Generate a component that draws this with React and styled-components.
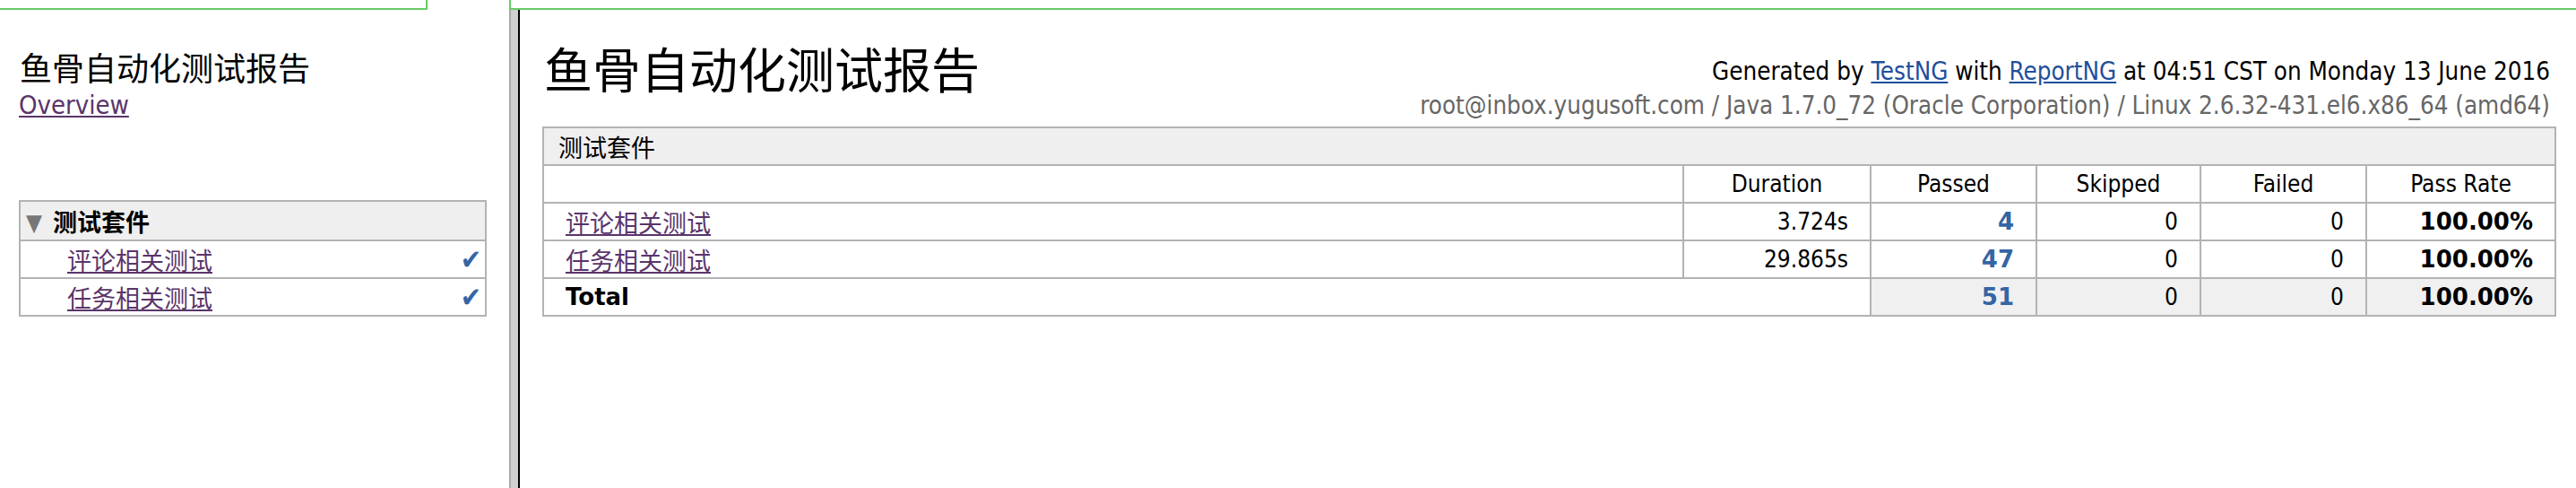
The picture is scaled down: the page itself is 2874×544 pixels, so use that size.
import React from 'react';
import styled, { createGlobalStyle } from 'styled-components';

const Global = createGlobalStyle`
  html, body { margin: 0; padding: 0; background: #fff; }
  body {
    font-family: "DejaVu Sans Condensed", "DejaVu Sans", "Noto Sans CJK SC", sans-serif;
    font-stretch: condensed;
    font-size: 26px;
    color: #000;
  }
`;

const Page = styled.div`
  width: 2874px;
  height: 544px;
  display: flex;
  flex-direction: column;
  overflow: hidden;
`;

const FocusStrip = styled.div`
  display: flex;
  height: 11px;
  flex: none;
`;

const LeftFocus = styled.div`
  width: 475px;
  height: 9px;
  border-right: 2px solid #66cc66;
  border-bottom: 2px solid #66cc66;
`;

const RightFocus = styled.div`
  flex: 1;
  margin-left: 91px;
  height: 9px;
  border-left: 2px solid #66cc66;
  border-bottom: 2px solid #66cc66;
`;

const Body = styled.div`
  flex: 1;
  display: flex;
  min-height: 0;
`;

const Sidebar = styled.div`
  width: 547px;
  padding-left: 21px;
  flex: none;
`;

const Divider = styled.div`
  width: 8px;
  flex: none;
  background: #d0d0d0;
  border-left: 2px solid #a9a9a9;
  border-right: 2px solid #000;
`;

const Main = styled.div`
  flex: 1;
  padding: 0 22px 0 25px;
  min-width: 0;
`;

const SideTitle = styled.h2`
  margin: 42px 0 0 1px;
  font-family: "Noto Sans CJK SC", sans-serif;
  font-weight: 400;
  font-size: 36px;
  line-height: 43px;
`;

const OverviewLink = styled.a`
  display: inline-block;
  margin-top: 5px;
  font-size: 29px;
  line-height: 33px;
  color: #5a356a;
  text-decoration: underline;
`;

const SuiteList = styled.table`
  margin-top: 89px;
  width: 522px;
  border-collapse: collapse;
`;

const SuiteHead = styled.th`
  height: 42px;
  padding: 0 0 0 6px;
  text-align: left;
  background: #efefef;
  border: 2px solid #b3b3b3;
  font-family: "Noto Sans CJK SC", sans-serif;
  font-size: 27px;
  font-weight: 700;
  white-space: nowrap;
`;

const Arrow = styled.span`
  display: inline-block;
  color: #777;
  font-family: "DejaVu Sans", sans-serif;
  font-size: 26px;
  margin-right: 12px;
  vertical-align: 1px;
`;

const SuiteCell = styled.td`
  height: 40px;
  padding: 0 4px 0 52px;
  border: 2px solid #b3b3b3;
  font-family: "Noto Sans CJK SC", sans-serif;
  font-size: 27px;
`;

const SuiteRow = styled.div`
  display: flex;
  align-items: center;
  justify-content: space-between;
`;

const VisitedLink = styled.a`
  color: #5a356a;
  text-decoration: underline;
  font-family: "Noto Sans CJK SC", sans-serif;
  font-size: 27px;
`;

const Check = styled.span`
  color: #3465a4;
  font-family: "DejaVu Sans", sans-serif;
  font-size: 31px;
  line-height: 36px;
`;

const Header = styled.div`
  display: flex;
  justify-content: space-between;
  align-items: flex-start;
`;

const MainTitle = styled.h1`
  margin: 32px 0 0 2px;
  font-family: "Noto Sans CJK SC", sans-serif;
  font-weight: 400;
  font-size: 54px;
  line-height: 65px;
`;

const Meta = styled.div`
  margin-top: 49px;
  padding-right: 7px;
  text-align: right;
  line-height: 38px;
  font-size: 27.5px;
`;

const MetaLine = styled.div`
  color: ${(p) => (p.$muted ? '#666' : '#000')};
  white-space: nowrap;
`;

const ToolLink = styled.a`
  color: #1f4f9c;
  text-decoration: underline;
`;

const Report = styled.table`
  margin-top: 5px;
  width: 2247px;
  border-collapse: collapse;
`;

const Band = styled.th`
  height: 40px;
  padding: 0 0 0 16px;
  text-align: left;
  background: #efefef;
  border: 2px solid #b3b3b3;
  font-family: "Noto Sans CJK SC", sans-serif;
  font-size: 27px;
  font-weight: 400;
`;

const ColHead = styled.th`
  height: 40px;
  padding: 0;
  border: 2px solid #b3b3b3;
  font-weight: 400;
  text-align: center;
  font-size: 26px;
`;

const NameCell = styled.td`
  height: 40px;
  padding: 0 0 0 24px;
  border: 2px solid #b3b3b3;
  text-align: left;
`;

const NumCell = styled.td`
  height: 40px;
  padding: 0 24px 0 0;
  border: 2px solid #b3b3b3;
  text-align: right;
  font-size: 26px;
  background: ${(p) => (p.$total ? '#f0f0f0' : '#fff')};
  color: ${(p) => (p.$pass ? '#3465a4' : '#000')};
  font-family: ${(p) => (p.$bold ? '"DejaVu Sans", sans-serif' : 'inherit')};
  font-stretch: ${(p) => (p.$bold ? 'normal' : 'condensed')};
  font-weight: ${(p) => (p.$bold ? 700 : 400)};
`;

const TotalLabel = styled.td`
  height: 40px;
  padding: 0 0 0 24px;
  border: 2px solid #b3b3b3;
  font-family: "DejaVu Sans", sans-serif;
  font-stretch: normal;
  font-weight: 700;
  font-size: 26px;
`;

const suites = [
  { name: '评论相关测试', duration: '3.724s', passed: 4, skipped: 0, failed: 0, rate: '100.00%' },
  { name: '任务相关测试', duration: '29.865s', passed: 47, skipped: 0, failed: 0, rate: '100.00%' },
];

export default function App() {
  return (
    <Page>
      <Global />
      <FocusStrip>
        <LeftFocus />
        <RightFocus />
      </FocusStrip>
      <Body>
        <Sidebar>
          <SideTitle>鱼骨自动化测试报告</SideTitle>
          <OverviewLink href="#overview">Overview</OverviewLink>
          <SuiteList>
            <thead>
              <tr>
                <SuiteHead><Arrow>▼</Arrow>测试套件</SuiteHead>
              </tr>
            </thead>
            <tbody>
              {suites.map((s) => (
                <tr key={s.name}>
                  <SuiteCell>
                    <SuiteRow>
                      <VisitedLink href="#suite">{s.name}</VisitedLink>
                      <Check>✔</Check>
                    </SuiteRow>
                  </SuiteCell>
                </tr>
              ))}
            </tbody>
          </SuiteList>
        </Sidebar>
        <Divider />
        <Main>
          <Header>
            <MainTitle>鱼骨自动化测试报告</MainTitle>
            <Meta>
              <MetaLine>
                Generated by <ToolLink href="#testng">TestNG</ToolLink> with{' '}
                <ToolLink href="#reportng">ReportNG</ToolLink> at 04:51 CST on Monday 13 June 2016
              </MetaLine>
              <MetaLine $muted>
                root@inbox.yugusoft.com / Java 1.7.0_72 (Oracle Corporation) / Linux 2.6.32-431.el6.x86_64 (amd64)
              </MetaLine>
            </Meta>
          </Header>
          <Report>
            <colgroup>
              <col />
              <col style={{ width: 209 }} />
              <col style={{ width: 185 }} />
              <col style={{ width: 183 }} />
              <col style={{ width: 185 }} />
              <col style={{ width: 211 }} />
            </colgroup>
            <thead>
              <tr>
                <Band colSpan={6}>测试套件</Band>
              </tr>
              <tr>
                <ColHead />
                <ColHead>Duration</ColHead>
                <ColHead>Passed</ColHead>
                <ColHead>Skipped</ColHead>
                <ColHead>Failed</ColHead>
                <ColHead>Pass Rate</ColHead>
              </tr>
            </thead>
            <tbody>
              {suites.map((s) => (
                <tr key={s.name}>
                  <NameCell>
                    <VisitedLink href="#suite">{s.name}</VisitedLink>
                  </NameCell>
                  <NumCell>{s.duration}</NumCell>
                  <NumCell $bold $pass>{s.passed}</NumCell>
                  <NumCell>{s.skipped}</NumCell>
                  <NumCell>{s.failed}</NumCell>
                  <NumCell $bold>{s.rate}</NumCell>
                </tr>
              ))}
              <tr>
                <TotalLabel colSpan={2}>Total</TotalLabel>
                <NumCell $total $bold $pass>51</NumCell>
                <NumCell $total>0</NumCell>
                <NumCell $total>0</NumCell>
                <NumCell $total $bold>100.00%</NumCell>
              </tr>
            </tbody>
          </Report>
        </Main>
      </Body>
    </Page>
  );
}
